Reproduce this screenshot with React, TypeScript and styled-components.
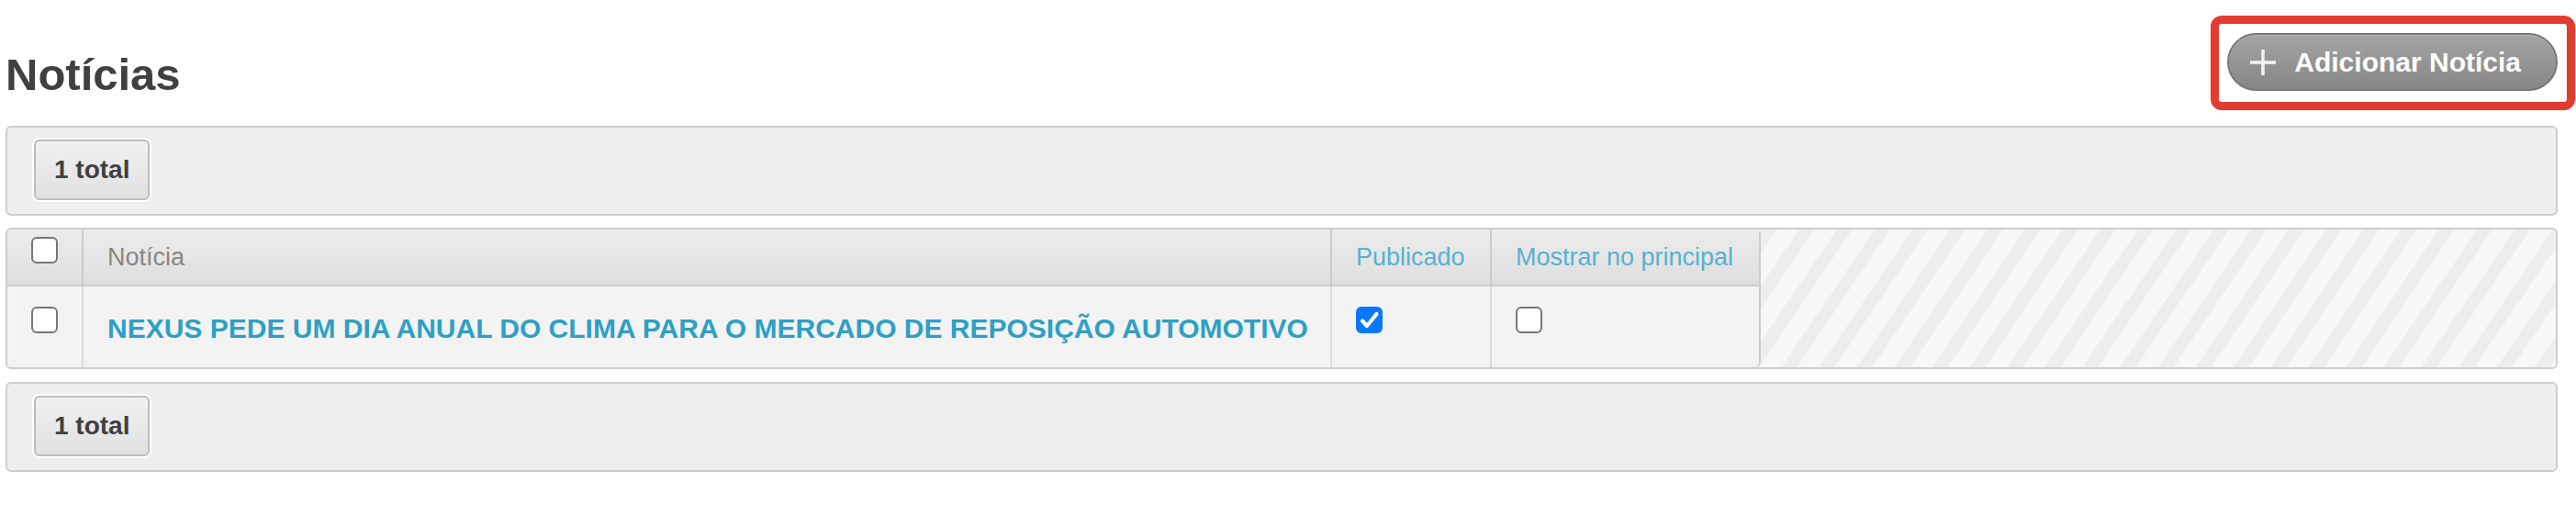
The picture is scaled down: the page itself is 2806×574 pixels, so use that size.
import React from "react";
import styled, { createGlobalStyle } from "styled-components";

const GlobalStyle = createGlobalStyle`
  html, body {
    margin: 0;
    padding: 0;
    background: #fff;
  }
  body {
    font-family: "Liberation Sans", Arial, Helvetica, sans-serif;
    color: #444;
  }
`;

const Page = styled.div`
  padding: 0 20px 0 6px;
`;

const Header = styled.header`
  height: 137px;
  box-sizing: border-box;
  padding-top: 36px;
  display: flex;
  justify-content: space-between;
  align-items: flex-start;
`;

const Title = styled.h1`
  margin: 17px 0 0;
  font-size: 49px;
  line-height: 56px;
  font-weight: 700;
  color: #404040;
`;

const AddButton = styled.button`
  position: relative;
  display: inline-flex;
  align-items: center;
  gap: 19px;
  height: 63px;
  box-sizing: border-box;
  padding: 0 38px 0 22px;
  border: 2px solid #797979;
  border-radius: 32px;
  background: linear-gradient(#a4a4a4, #868686);
  box-shadow: inset 0 1px 0 rgba(255, 255, 255, 0.25);
  color: #fff;
  font-family: inherit;
  font-size: 30px;
  font-weight: 700;
  cursor: pointer;

  /* red highlight frame drawn over the screenshot */
  &::after {
    content: "";
    position: absolute;
    top: -21px;
    left: -20px;
    right: -21px;
    bottom: -23px;
    border: 9px solid #e33b2f;
    border-radius: 12px;
    pointer-events: none;
  }
`;

const PlusIcon = () => (
  <svg width="30" height="30" viewBox="0 0 30 30">
    <g stroke="#f2f2f2" strokeWidth="3.6" strokeLinecap="butt">
      <line x1="15" y1="1" x2="15" y2="29" />
      <line x1="1" y1="15" x2="29" y2="15" />
    </g>
  </svg>
);

const Bar = styled.div<{ $gap: number }>`
  border: 2px solid #cdcdcd;
  border-radius: 6px;
  background: #eee;
  padding: 13px 27px 15px 29px;
  margin-bottom: ${({ $gap }) => $gap}px;
`;

const TotalButton = styled.button`
  height: 66px;
  box-sizing: border-box;
  padding: 0 20px;
  border: 2px solid #bdbdbd;
  border-radius: 6px;
  background: linear-gradient(#f1f1f1, #e1e1e1);
  box-shadow: 0 0 0 2px #fff;
  color: #404040;
  font-family: inherit;
  font-size: 28px;
  font-weight: 700;
  line-height: 62px;
`;

const Module = styled.div`
  display: flex;
  border: 2px solid #cdcdcd;
  border-radius: 6px;
  overflow: hidden;
  margin-bottom: 14px;
  background-color: #f6f6f6;
  background-image: repeating-linear-gradient(
    124deg,
    #f8f8f8 0 20px,
    #eeeeee 20px 34px
  );
`;

const Grid = styled.div`
  display: grid;
  grid-template-columns: 83px 1360px 174px 291px;
  border-right: 2px solid #cdcdcd;
  border-radius: 0 6px 6px 0;
  overflow: hidden;
`;

const HeadCell = styled.div<{ $sortable?: boolean; $center?: boolean; $last?: boolean }>`
  box-sizing: border-box;
  padding: 8px ${({ $center }) => ($center ? "0" : "26px")} 7px;
  display: flex;
  justify-content: ${({ $center }) => ($center ? "center" : "flex-start")};
  align-items: flex-start;
  background: linear-gradient(#ececec, #dfdfdf);
  border-bottom: 2px solid #cbcbcb;
  border-right: ${({ $last }) => ($last ? "none" : "2px solid #cbcbcb")};
  font-size: 27px;
  line-height: 45px;
  color: ${({ $sortable }) => ($sortable ? "#59b1cf" : "#888")};
  white-space: nowrap;
`;

const Cell = styled.div<{ $center?: boolean; $last?: boolean }>`
  box-sizing: border-box;
  padding: 22px ${({ $center }) => ($center ? "0" : "26px")} 19px;
  display: flex;
  justify-content: ${({ $center }) => ($center ? "center" : "flex-start")};
  align-items: flex-start;
  background: #f3f3f3;
  border-right: ${({ $last }) => ($last ? "none" : "2px solid #dcdcdc")};
  line-height: 47px;
  white-space: nowrap;
`;

const NewsLink = styled.a`
  color: #2f9fc5;
  font-size: 30px;
  font-weight: 700;
  text-decoration: none;
`;

const Box = styled.span<{ $checked?: boolean }>`
  display: inline-flex;
  align-items: center;
  justify-content: center;
  width: 29px;
  height: 29px;
  box-sizing: border-box;
  border-radius: 6px;
  border: ${({ $checked }) => ($checked ? "none" : "2px solid #767676")};
  background: ${({ $checked }) => ($checked ? "#0b77fb" : "#fff")};
`;

const Checkbox = ({ checked = false }: { checked?: boolean }) => (
  <Box $checked={checked}>
    {checked && (
      <svg width="29" height="29" viewBox="0 0 29 29">
        <polyline
          points="7,15.5 12,21 22.5,8"
          fill="none"
          stroke="#fff"
          strokeWidth="4.2"
          strokeLinecap="round"
          strokeLinejoin="round"
        />
      </svg>
    )}
  </Box>
);

export default function App() {
  return (
    <>
      <GlobalStyle />
      <Page>
        <Header>
          <Title>Notícias</Title>
          <AddButton>
            <PlusIcon />
            Adicionar Notícia
          </AddButton>
        </Header>

        <Bar $gap={13}>
          <TotalButton>1 total</TotalButton>
        </Bar>

        <Module>
          <Grid>
            <HeadCell $center>
              <Checkbox />
            </HeadCell>
            <HeadCell>Notícia</HeadCell>
            <HeadCell $sortable>Publicado</HeadCell>
            <HeadCell $sortable $last>
              Mostrar no principal
            </HeadCell>

            <Cell $center>
              <Checkbox />
            </Cell>
            <Cell>
              <NewsLink href="#">
                NEXUS PEDE UM DIA ANUAL DO CLIMA PARA O MERCADO DE REPOSIÇÃO AUTOMOTIVO
              </NewsLink>
            </Cell>
            <Cell>
              <Checkbox checked />
            </Cell>
            <Cell $last>
              <Checkbox />
            </Cell>
          </Grid>
        </Module>

        <Bar $gap={0}>
          <TotalButton>1 total</TotalButton>
        </Bar>
      </Page>
    </>
  );
}
